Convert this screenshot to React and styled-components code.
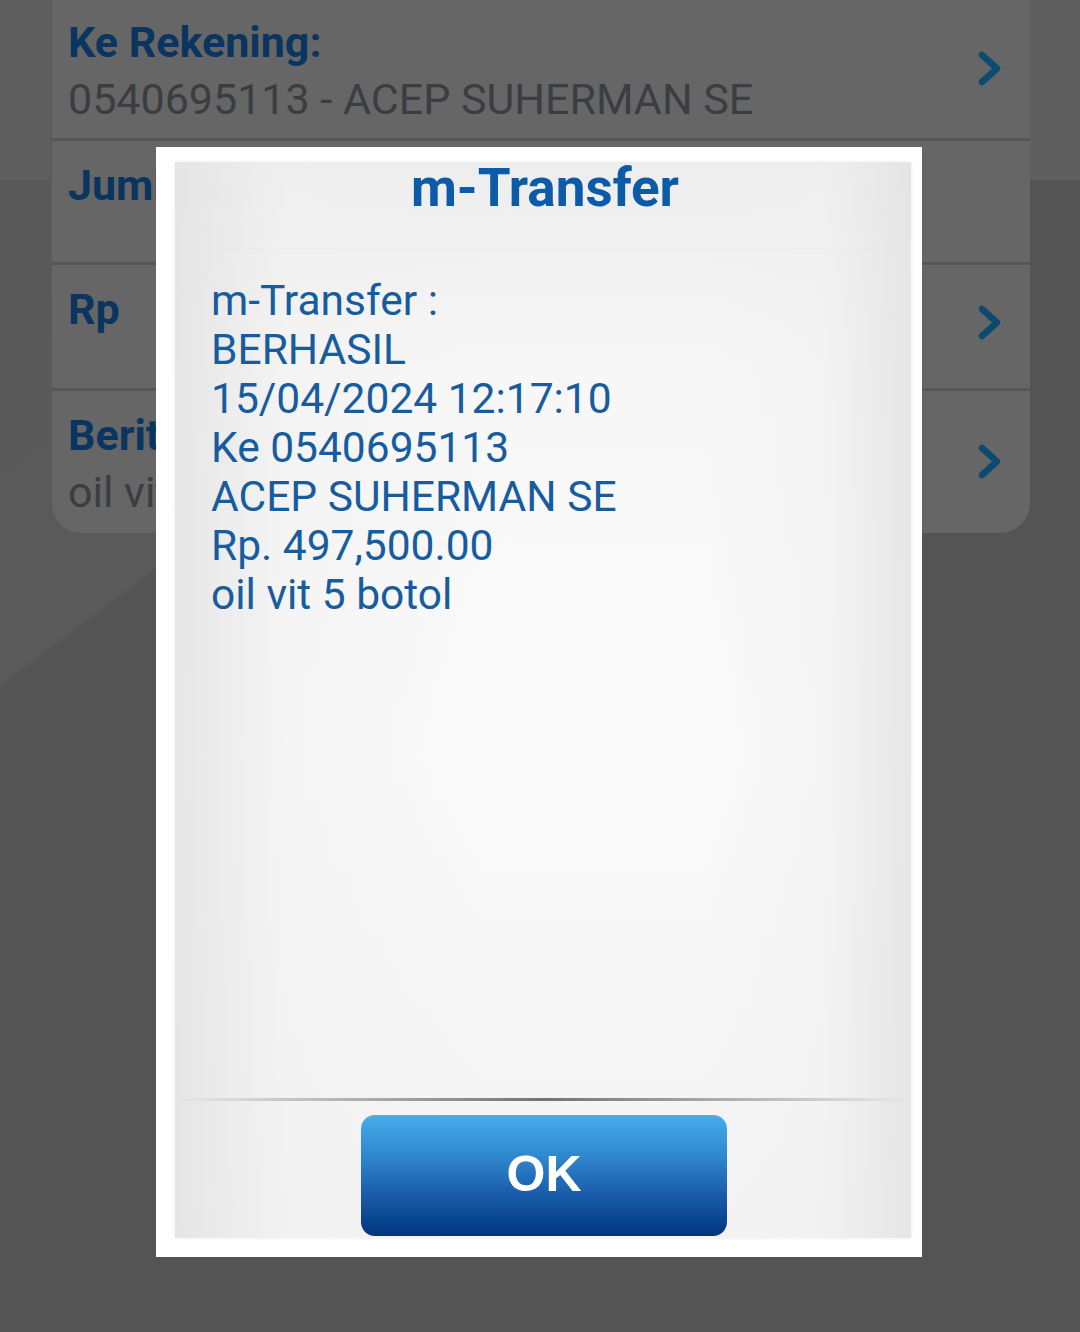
import React from "react";
import styled, { createGlobalStyle } from "styled-components";

const Global = createGlobalStyle`
  html, body { margin: 0; padding: 0; }
  body {
    width: 1080px;
    height: 1332px;
    overflow: hidden;
    font-family: Roboto, "Noto Sans", sans-serif;
    background: #555555;
  }
`;

const Screen = styled.div`
  position: relative;
  width: 1080px;
  height: 1332px;
  overflow: hidden;
  background:
    linear-gradient(to bottom, #5f5f5f 0, #5f5f5f 180px, rgba(0,0,0,0) 180px),
    linear-gradient(143deg, #585858 0, #5a5a5a 546px, #545454 550px, #545454 100%);
  padding-left: 50px;
  box-sizing: border-box;
`;

const Card = styled.div`
  width: 980px;
  background: #666666;
  border-left: 2px solid #5a5a5a;
  border-radius: 0 0 30px 30px;
  box-sizing: border-box;
  overflow: hidden;
`;

const Row = styled.div`
  display: flex;
  align-items: center;
  height: ${(p) => p.$h}px;
  padding: ${(p) => p.$pt}px 26px 0 16px;
  box-sizing: border-box;
  border-top: ${(p) => (p.$first ? "none" : "3px solid #565656")};
`;

const RowText = styled.div`
  flex: 1;
  display: flex;
  flex-direction: column;
  align-self: flex-start;
`;

const Label = styled.div`
  font-family: Roboto, sans-serif;
  font-weight: 700;
  font-size: 43px;
  line-height: 57px;
  color: #0a3560;
  white-space: nowrap;
`;

const Value = styled.div`
  font-family: Roboto, sans-serif;
  font-weight: 400;
  font-size: 43px;
  line-height: 57px;
  color: #3a3d41;
  white-space: nowrap;
`;

const Chevron = styled.svg`
  width: 30px;
  height: 40px;
  flex: none;
  align-self: center;
  margin-top: ${(p) => p.$dy || 0}px;
`;

const Overlay = styled.div`
  position: absolute;
  left: 156px;
  top: 147px;
  width: 766px;
  height: 1110px;
  background: #ffffff;
  padding: 15px 11px 19px 19px;
  box-sizing: border-box;
  display: flex;
`;

const Panel = styled.div`
  flex: 1;
  display: flex;
  flex-direction: column;
  background:
    linear-gradient(to right, rgba(228,228,228,0.9) 0, rgba(240,240,240,0.5) 15%, rgba(255,255,255,0) 42%, rgba(255,255,255,0) 72%, rgba(240,240,240,0.5) 88%, rgba(228,228,228,0.9) 100%),
    linear-gradient(to bottom, #ededed 0, #f7f7f7 20%, #fafafa 55%, #f3f3f3 100%);
  box-shadow: 0 0 4px rgba(0,0,0,0.08);
`;

const Header = styled.div`
  height: 86px;
  display: flex;
  justify-content: center;
  border-bottom: 1px solid rgba(232,232,232,0.6);
`;

const Title = styled.h1`
  margin: 0;
  font-family: Roboto, sans-serif;
  font-weight: 700;
  font-size: 53px;
  line-height: 52px;
  color: #0b5ba8;
  padding-left: 4px;
`;

const Body = styled.div`
  flex: 1;
  padding: 27px 0 0 36px;
`;

const Line = styled.div`
  font-family: Roboto, sans-serif;
  font-weight: 400;
  font-size: 42.5px;
  line-height: 49px;
  color: #165c9f;
  white-space: nowrap;
`;

const Divider = styled.div`
  height: 3px;
  background: linear-gradient(to right, rgba(200,200,205,0) 0, #c4c6ca 15%, #6f7379 50%, #c4c6ca 85%, rgba(200,200,205,0) 100%);
`;

const Footer = styled.div`
  height: 137px;
  display: flex;
  justify-content: center;
  padding-top: 14px;
  box-sizing: border-box;
`;

const OkButton = styled.button`
  width: 366px;
  height: 121px;
  border: none;
  border-radius: 14px;
  background: linear-gradient(to bottom, #47adec 0, #2f86cc 35%, #1a5dab 65%, #00357f 100%);
  color: #ffffff;
  font-family: "Liberation Sans", Arial, sans-serif;
  font-weight: 700;
  font-size: 50px;
  line-height: 1;
  padding: 0 0 4px 0;
  margin-left: 2px;
  cursor: pointer;
`;

const ChevronIcon = ({ dy }) => (
  <Chevron viewBox="0 0 30 40" $dy={dy}>
    <path d="M8 6 L23 19.5 L8 33" fill="none" stroke="#0d4a6f" strokeWidth="6.5" strokeLinecap="round" strokeLinejoin="round" />
  </Chevron>
);

const lines = [
  "m-Transfer :",
  "BERHASIL",
  "15/04/2024 12:17:10",
  "Ke 0540695113",
  "ACEP SUHERMAN SE",
  "Rp. 497,500.00",
  "oil vit 5 botol",
];

export default function App() {
  return (
    <>
      <Global />
      <Screen>
        <Card>
          <Row $first $h={138} $pt={14}>
            <RowText>
              <Label>Ke Rekening:</Label>
              <Value>0540695113 - ACEP SUHERMAN SE</Value>
            </RowText>
            <ChevronIcon dy={-14} />
          </Row>
          <Row $h={124} $pt={16}>
            <RowText>
              <Label>Jumlah:</Label>
            </RowText>
          </Row>
          <Row $h={126} $pt={16}>
            <RowText>
              <Label>Rp</Label>
            </RowText>
            <ChevronIcon dy={-24} />
          </Row>
          <Row $h={145} $pt={16}>
            <RowText>
              <Label>Berita:</Label>
              <Value>oil vit 5 botol</Value>
            </RowText>
            <ChevronIcon dy={-16} />
          </Row>
        </Card>
        <Overlay>
          <Panel>
            <Header>
              <Title>m-Transfer</Title>
            </Header>
            <Body>
              {lines.map((l) => (
                <Line key={l}>{l}</Line>
              ))}
            </Body>
            <Divider />
            <Footer>
              <OkButton>OK</OkButton>
            </Footer>
          </Panel>
        </Overlay>
      </Screen>
    </>
  );
}
